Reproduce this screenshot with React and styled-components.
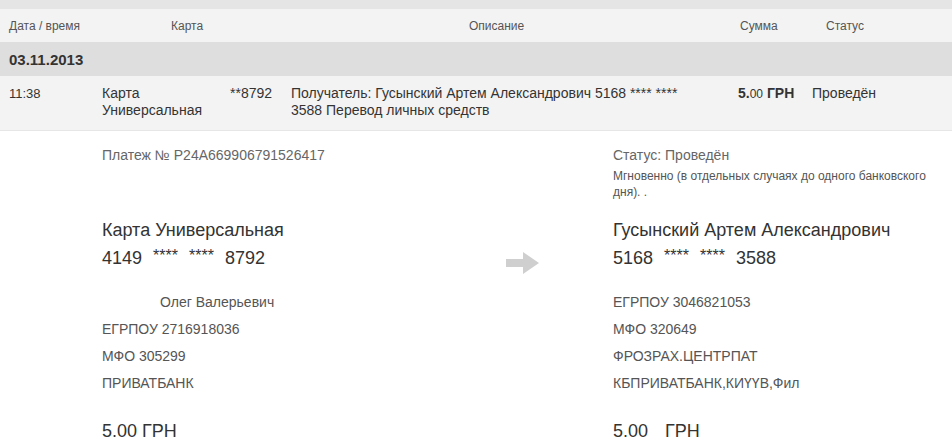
import React from 'react'
import styled, { createGlobalStyle } from 'styled-components'

const GlobalStyle = createGlobalStyle`
    body {
        margin: 0;
        background: #ffffff;
        font-family: "Liberation Sans", Arial, sans-serif;
        color: #333;
    }
`

const Page = styled.div`
    width: 952px;
    height: 448px;
    overflow: hidden;
`

const TopBand = styled.div`
    height: 9px;
    background: #e5e5e5;
`

const HeaderRow = styled.div`
    display: grid;
    grid-template-columns: 162px 298px 271px 86px 1fr;
    align-items: center;
    height: 33px;
    padding-left: 9px;
    background: #f3f3f3;
    font-size: 12px;
    color: #555;
`

const DateRow = styled.div`
    display: flex;
    align-items: center;
    height: 34px;
    padding-left: 9px;
    background: #dedede;
    font-size: 15px;
    font-weight: bold;
    color: #333;
`

const TxnRow = styled.div`
    display: grid;
    grid-template-columns: 93px 128px 61px 447px 74px 1fr;
    height: 55px;
    box-sizing: border-box;
    padding: 9px 0 0 9px;
    background: #f3f3f3;
    border-bottom: 1px solid #e6e6e6;
    font-size: 14px;
    line-height: 17px;
    color: #333;
`

const Cell = styled.div`
    font-size: ${(p) => (p.$small ? '13px' : '14px')};
    padding-right: ${(p) => p.$pad || 6}px;
`

const Amount = styled.div`
    font-size: 14px;
    font-weight: bold;
    small {
        font-size: 12px;
        font-weight: normal;
    }
`

const Details = styled.div`
    display: grid;
    grid-template-columns: 404px 107px 1fr;
    padding: 16px 0 0 102px;
`

const InfoLine = styled.div`
    font-size: 14px;
    line-height: 16px;
    color: #666;
`

const Note = styled.div`
    width: 330px;
    margin-top: 5px;
    font-size: 12px;
    line-height: 16px;
    color: #555;
`

const Party = styled.div`
    padding-top: 17px;
`

const PartyTitle = styled.div`
    font-size: 18px;
    line-height: 26px;
    color: #333;
`

const CardNumber = styled.div`
    font-size: 18px;
    line-height: 26px;
    color: #333;
    word-spacing: 6px;
    span {
        font-size: 16px;
        vertical-align: 3px;
    }
`

const Props = styled.div`
    margin-top: 18px;
`

const PropLine = styled.div`
    font-size: 14px;
    line-height: 27px;
    color: #555;
    padding-left: ${(p) => p.$indent || 0}px;
`

const Total = styled.div`
    margin-top: 21px;
    font-size: 18px;
    line-height: 27px;
    color: #333;
    word-spacing: ${(p) => (p.$wide ? '12px' : '0')};
`

const ArrowCell = styled.div`
    padding-top: 52px;
`

const Arrow = () => (
    <svg width="34" height="22" viewBox="0 0 34 22">
        <path d="M0 7 H17 V0 L33 11 L17 22 V15 H0 Z" fill="#cfcfcf" />
    </svg>
)

const Stars = () => <span>****</span>

export default function App() {
    return (
        <Page>
            <GlobalStyle />
            <TopBand />
            <HeaderRow>
                <div>Дата / время</div>
                <div>Карта</div>
                <div>Описание</div>
                <div>Сумма</div>
                <div>Статус</div>
            </HeaderRow>
            <DateRow>03.11.2013</DateRow>
            <TxnRow>
                <Cell $small>11:38</Cell>
                <Cell>Карта Универсальная</Cell>
                <Cell>**8792</Cell>
                <Cell $pad={40}>Получатель: Гусынский Артем Александрович 5168 **** **** 3588 Перевод личных средств</Cell>
                <Amount>5.<small>00</small> ГРН</Amount>
                <Cell>Проведён</Cell>
            </TxnRow>
            <Details>
                <div>
                    <InfoLine>Платеж № P24A669906791526417</InfoLine>
                </div>
                <div />
                <div>
                    <InfoLine>Статус: Проведён</InfoLine>
                    <Note>Мгновенно (в отдельных случаях до одного банковского дня). .</Note>
                </div>

                <Party>
                    <PartyTitle>Карта Универсальная</PartyTitle>
                    <CardNumber>4149 <Stars /> <Stars /> 8792</CardNumber>
                    <Props>
                        <PropLine $indent={58}>Олег Валерьевич</PropLine>
                        <PropLine>ЕГРПОУ 2716918036</PropLine>
                        <PropLine>МФО 305299</PropLine>
                        <PropLine>ПРИВАТБАНК</PropLine>
                    </Props>
                    <Total>5.00 ГРН</Total>
                </Party>
                <ArrowCell>
                    <Arrow />
                </ArrowCell>
                <Party>
                    <PartyTitle>Гусынский Артем Александрович</PartyTitle>
                    <CardNumber>5168 <Stars /> <Stars /> 3588</CardNumber>
                    <Props>
                        <PropLine>ЕГРПОУ 3046821053</PropLine>
                        <PropLine>МФО 320649</PropLine>
                        <PropLine>ФРОЗРАХ.ЦЕНТРПАТ</PropLine>
                        <PropLine>КБПРИВАТБАНК,КИҮҮВ,Фил</PropLine>
                    </Props>
                    <Total $wide>5.00 ГРН</Total>
                </Party>
            </Details>
        </Page>
    )
}
